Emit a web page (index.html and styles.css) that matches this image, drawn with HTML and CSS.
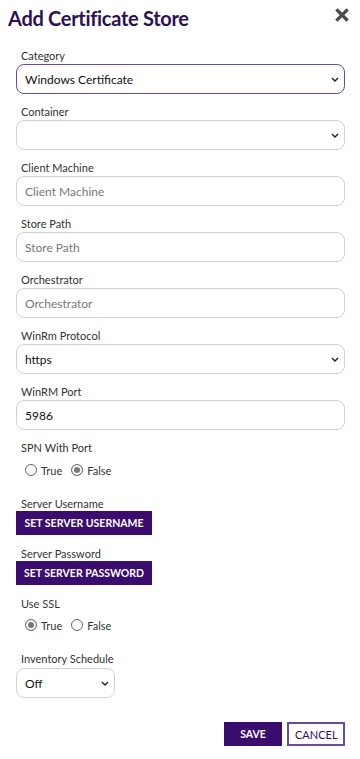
FILE: index.html
```html
<!DOCTYPE html>
<html lang="en">
  <head>
    <meta charset="UTF-8" />
    <meta name="viewport" content="width=device-width, initial-scale=1.0" />
    <title>Add Certificate Store</title>
    <link rel="stylesheet" href="styles.css">
  </head>
  <body>
    <div class="modal">
      <div class="modal-header">
        <h1>Add Certificate Store</h1>
        <button type="button" class="close-button" aria-label="Close">
          <svg width="14" height="14" viewBox="0 0 14 14">
            <path d="M2.5 2.5 L11.5 11.5 M11.5 2.5 L2.5 11.5" stroke="#4a4a4a" stroke-width="3.2" stroke-linecap="square" />
          </svg>
        </button>
      </div>
      <form class="store-form">
        <div class="field">
          <label for="category">Category</label>
          <select id="category" class="focused">
            <option>Windows Certificate</option>
          </select>
        </div>
        <div class="field">
          <label for="container">Container</label>
          <select id="container">
            <option></option>
          </select>
        </div>
        <div class="field">
          <label for="client_machine">Client Machine</label>
          <input type="text" id="client_machine" placeholder="Client Machine" />
        </div>
        <div class="field">
          <label for="store_path">Store Path</label>
          <input type="text" id="store_path" placeholder="Store Path" />
        </div>
        <div class="field">
          <label for="orchestrator">Orchestrator</label>
          <input type="text" id="orchestrator" placeholder="Orchestrator" />
        </div>
        <div class="field">
          <label for="protocol">WinRm Protocol</label>
          <select id="protocol">
            <option>https</option>
          </select>
        </div>
        <div class="field">
          <label for="port">WinRM Port</label>
          <input type="text" id="port" value="5986" />
        </div>
        <div class="field radio-field">
          <span class="field-label">SPN With Port</span>
          <div class="radio-row">
            <label class="radio-option"><input type="radio" name="spn" /> True</label>
            <label class="radio-option"><input type="radio" name="spn" checked /> False</label>
          </div>
        </div>
        <div class="field button-field">
          <span class="field-label">Server Username</span>
          <button type="button" class="set-button">SET SERVER USERNAME</button>
        </div>
        <div class="field button-field">
          <span class="field-label">Server Password</span>
          <button type="button" class="set-button">SET SERVER PASSWORD</button>
        </div>
        <div class="field radio-field ssl-field">
          <span class="field-label">Use SSL</span>
          <div class="radio-row">
            <label class="radio-option"><input type="radio" name="ssl" checked /> True</label>
            <label class="radio-option"><input type="radio" name="ssl" /> False</label>
          </div>
        </div>
        <div class="field schedule-field">
          <label for="schedule">Inventory Schedule</label>
          <select id="schedule" class="small-select">
            <option>Off</option>
          </select>
        </div>
        <div class="form-actions">
          <button type="button" class="save-button">SAVE</button>
          <button type="button" class="cancel-button">CANCEL</button>
        </div>
      </form>
    </div>
  </body>
</html>
```

FILE: styles.css
```css
body {
  margin: 0;
  font-family: Lato, "Open Sans", sans-serif;
  background-color: #fff;
  color: #222;
}
.modal {
  width: 360px;
}
.modal-header {
  display: flex;
  justify-content: space-between;
  align-items: flex-start;
  padding: 6px 11px 0 8px;
  height: 43px;
}
h1 {
  margin: 0;
  font-size: 20px;
  font-weight: 700;
  letter-spacing: -0.3px;
  color: #2b1158;
  line-height: 24px;
}
.close-button {
  border: none;
  background: none;
  padding: 0;
  margin-top: 2px;
  cursor: pointer;
}
.store-form {
  padding: 0 15px 0 16px;
}
.field {
  margin-bottom: 11px;
}
.field label,
.field-label {
  display: block;
  padding-left: 5px;
  font-size: 11px;
  line-height: 13px;
  color: #333;
  margin-bottom: 2px;
}
select,
input[type="text"] {
  display: block;
  width: 100%;
  box-sizing: border-box;
  height: 30px;
  padding: 0 8px;
  border: 1px solid #d2d2d2;
  border-radius: 8px;
  font-family: Lato, "Open Sans", sans-serif;
  font-size: 12px;
  color: #111;
  background-color: #fff;
  outline: none;
}
input::placeholder {
  color: #777;
}
select {
  appearance: none;
  -webkit-appearance: none;
  background-image: url("data:image/svg+xml,%3Csvg xmlns='http://www.w3.org/2000/svg' width='8' height='5' viewBox='0 0 8 5'%3E%3Cpath d='M1 1 L4 4 L7 1' fill='none' stroke='%23222' stroke-width='1.4'/%3E%3C/svg%3E");
  background-repeat: no-repeat;
  background-position: right 5px center;
  padding-right: 20px;
}
select.focused {
  border-color: #6a4a9c;
}
.small-select {
  width: 99px;
}
.radio-field {
  margin-bottom: 13px;
}
.radio-row {
  display: flex;
  gap: 9px;
  padding-left: 9px;
  height: 28px;
  align-items: center;
}
.field .radio-option {
  display: flex;
  align-items: center;
  gap: 4px;
  padding-left: 0;
  margin: 0;
  font-size: 11px;
  color: #333;
}
.radio-option input {
  appearance: none;
  -webkit-appearance: none;
  margin: 0;
  width: 12px;
  height: 12px;
  border: 1px solid #666;
  border-radius: 50%;
  box-sizing: border-box;
  background: #fff;
}
.radio-option input:checked {
  border-color: #777;
  box-shadow: inset 0 0 0 2px #fff;
  background: #7a7a7a;
}
.button-field {
  margin-bottom: 12px;
}
.button-field .field-label {
  margin-bottom: 1px;
}
.set-button,
.save-button,
.cancel-button {
  font-family: Lato, "Open Sans", sans-serif;
  font-weight: 700;
  font-size: 10.5px;
  height: 24px;
  border-radius: 0;
  cursor: pointer;
}
.set-button {
  display: block;
  width: 136px;
  padding: 0;
  border: none;
  background-color: #3a0c6e;
  color: #fff;
}
.ssl-field {
  margin-bottom: 14px;
}
.ssl-field .radio-row {
  height: 26px;
}
.schedule-field {
  margin-bottom: 0;
}
.schedule-field label {
  margin-bottom: 3px;
}
.form-actions {
  display: flex;
  justify-content: flex-end;
  gap: 5px;
  margin-top: 24px;
}
.save-button {
  width: 58px;
  border: none;
  background-color: #3a0c6e;
  color: #fff;
}
.cancel-button {
  width: 58px;
  border: 2px solid #6a4a9c;
  background-color: #fff;
  color: #2b1158;
  font-weight: 400;
  font-size: 11px;
}
```
